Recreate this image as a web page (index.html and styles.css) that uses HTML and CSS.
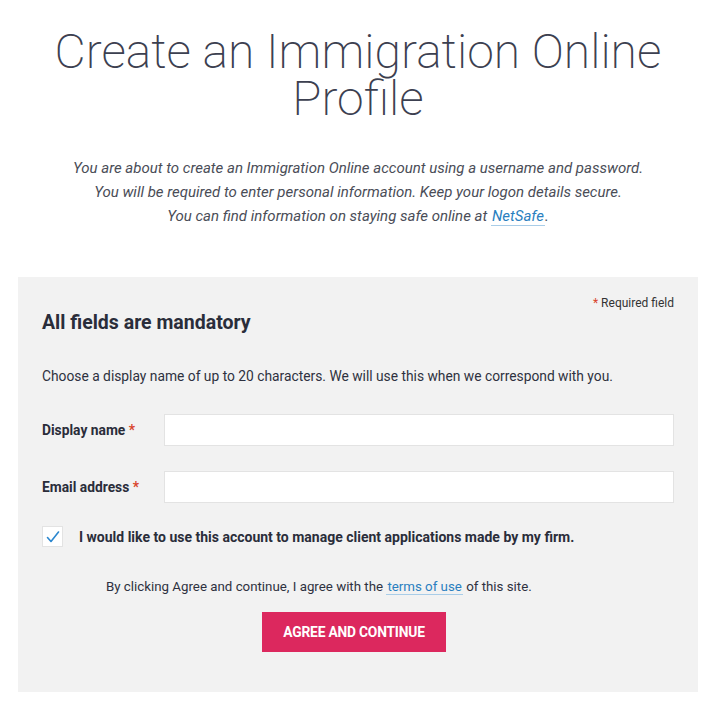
FILE: index.html
```html
<!DOCTYPE html>
<html lang="en">
<head>
<meta charset="utf-8">
<title>Create an Immigration Online Profile</title>
<link rel="stylesheet" href="styles.css">
</head>
<body>
<main class="page">
  <h1 class="title">Create an Immigration Online Profile</h1>
  <p class="intro">You are about to create an Immigration Online account using a username and password.<br>You will be required to enter personal information. Keep your logon details secure.<br>You can find information on staying safe online at <a href="#" class="link">NetSafe</a>.</p>

  <form class="panel">
    <div class="required-note"><span class="star">*</span> Required field</div>
    <h2 class="panel-title">All fields are mandatory</h2>
    <p class="hint">Choose a display name of up to 20 characters. We will use this when we correspond with you.</p>

    <div class="field">
      <label class="field-label" for="dn">Display name <span class="star">*</span></label>
      <input class="field-input" id="dn" type="text">
    </div>
    <div class="field">
      <label class="field-label" for="em">Email address <span class="star">*</span></label>
      <input class="field-input" id="em" type="text">
    </div>

    <label class="check">
      <span class="check-box">
        <svg width="14" height="14" viewBox="0 0 14 14"><path d="M1.5 7.5 L5 11.5 L12.5 2" fill="none" stroke="#2b87cf" stroke-width="1.6" stroke-linecap="round" stroke-linejoin="round"/></svg>
      </span>
      <span class="check-text">I would like to use this account to manage client applications made by my firm.</span>
    </label>

    <p class="terms">By clicking Agree and continue, I agree with the <a href="#" class="link">terms of use</a> of this site.</p>
    <div class="actions">
      <button type="button" class="btn">AGREE AND CONTINUE</button>
    </div>
  </form>
</main>
</body>
</html>
```

FILE: styles.css
```css
* { box-sizing: border-box; }
html, body { margin: 0; padding: 0; background: #fff; }
body { font-family: Roboto, "Liberation Sans", sans-serif; color: #2e3140; }

.page { padding: 28px 22px 0 18px; }

.title {
  margin: 0 auto;
  width: 660px;
  text-align: center;
  font-weight: 200;
  font-size: 48px;
  line-height: 47px;
  color: #3c4050;
}

.intro {
  margin: 34px 0 0;
  text-align: center;
  font-style: italic;
  font-size: 15px;
  line-height: 24px;
  color: #4a4d57;
}

.link {
  color: #2a7fc0;
  text-decoration: none;
  border-bottom: 1px solid #a9cde8;
  padding: 0 1px;
}

.panel {
  margin-top: 49px;
  background: #f2f2f2;
  padding: 19px 24px 40px;
}

.required-note {
  text-align: right;
  font-size: 12px;
  line-height: 14px;
  color: #333;
}
.star { color: #d9442c; }

.panel-title {
  margin: 1px 0 0;
  font-size: 19.5px;
  line-height: 24px;
  font-weight: 700;
  color: #2a2d3a;
}

.hint {
  margin: 32px 0 0;
  font-size: 13.8px;
  line-height: 18px;
  color: #2e3140;
}

.field {
  display: flex;
  align-items: center;
  margin-top: 29px;
}
.field + .field { margin-top: 25px; }
.field-label {
  width: 122px;
  flex: none;
  font-size: 13.8px;
  font-weight: 700;
  color: #2a2d3a;
}
.field-input {
  flex: 1;
  height: 32px;
  border: 1px solid #e3e3e3;
  background: #fff;
  font: inherit;
}

.check {
  display: flex;
  align-items: center;
  margin-top: 23px;
}
.check-box {
  width: 21px;
  height: 21px;
  flex: none;
  background: #fff;
  border: 1px solid #e3e3e3;
  display: flex;
  align-items: center;
  justify-content: center;
}
.check-text {
  margin-left: 16px;
  font-size: 14px;
  font-weight: 700;
  color: #2a2d3a;
}

.terms {
  margin: 30px 0 0;
  padding-left: 64px;
  font-size: 13.3px;
  line-height: 20px;
  color: #2e3140;
}

.actions {
  display: flex;
  justify-content: center;
  margin-top: 15px;
  padding-right: 8px;
}
.btn {
  width: 184px;
  height: 40px;
  border: 0;
  background: #dc285e;
  color: #fff;
  font-family: Roboto, "Liberation Sans", sans-serif;
  font-weight: 700;
  font-size: 13.8px;
  letter-spacing: -0.2px;
}
```
